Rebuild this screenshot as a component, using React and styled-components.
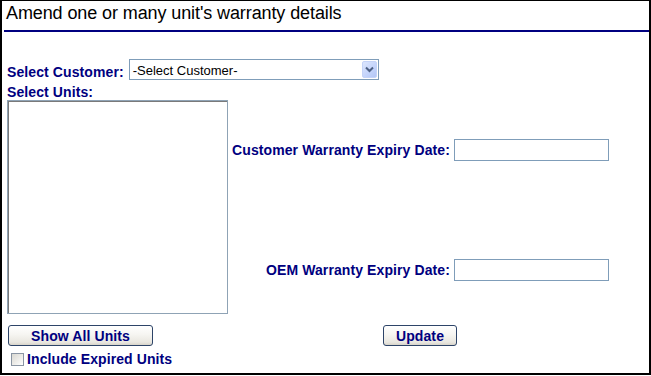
import React from "react";
import styled, { createGlobalStyle } from "styled-components";

const Global = createGlobalStyle`
  html, body { margin: 0; padding: 0; background: #fff; }
  * { box-sizing: border-box; }
`;

const Frame = styled.div`
  width: 651px;
  height: 375px;
  border-style: solid;
  border-color: #000;
  border-width: 1px 2px 2px 2px;
  background: #fff;
  font-family: "Liberation Sans", Arial, sans-serif;
  display: flex;
  flex-direction: column;
`;

const Title = styled.div`
  padding: 2px 0 0 4px;
  height: 23px;
  font-size: 18px;
  line-height: 21px;
  letter-spacing: -0.1px;
  color: #000;
`;

const Rule = styled.div`
  height: 2px;
  margin: 6px 0 0 2px;
  background: #000080;
`;

const Form = styled.div`
  padding-left: 5px;
  display: flex;
  flex-direction: column;
`;

const Row = styled.div`
  display: flex;
  align-items: ${(p) => p.$align || "center"};
  gap: ${(p) => p.$gap || 0}px;
  margin-top: ${(p) => p.$top || 0}px;
`;

const Label = styled.span`
  font-size: 14px;
  font-weight: bold;
  line-height: 16px;
  letter-spacing: 0.1px;
  color: #000080;
  white-space: nowrap;
  padding-top: ${(p) => p.$drop || 0}px;
`;

const SelectBox = styled.div`
  width: 250px;
  height: 21px;
  border: 1px solid #7f9db9;
  background: #fff;
  display: flex;
  align-items: center;
  justify-content: space-between;
  font-size: 13px;
  color: #000;
  padding-left: 3px;
`;

const SelectText = styled.span`
  line-height: 15px;
  padding-top: 1px;
`;

const ArrowBtn = styled.span`
  width: 15px;
  height: 17px;
  margin-right: 1px;
  border-radius: 2px;
  background: linear-gradient(135deg, #dce6fd 0%, #c3d3fb 60%, #b3c6f5 100%);
  border: 1px solid #c4d3f8;
  display: flex;
  align-items: center;
  justify-content: center;
`;

const ListBox = styled.div`
  width: 221px;
  height: 214px;
  border: 1px solid #8fa3b5;
  box-shadow: inset 1px 1px 0 #7a7a7a;
  background: #fff;
  flex: none;
`;

const RightCol = styled.div`
  width: 381px;
  padding-top: 39px;
  display: flex;
  flex-direction: column;
  gap: 98px;
`;

const FieldRow = styled.div`
  display: flex;
  justify-content: flex-end;
  align-items: center;
  gap: 4px;
`;

const TextInput = styled.div`
  width: 155px;
  height: 22px;
  border: 1px solid #7f9db9;
  background: #fff;
`;

const Button = styled.div`
  width: ${(p) => p.$w}px;
  height: 21px;
  margin-left: ${(p) => p.$ml || 0}px;
  border: 1px solid #2d4468;
  border-radius: 3px;
  background: linear-gradient(#ffffff 0%, #f6f5f1 45%, #e9e7e0 85%, #d8d4ca 100%);
  display: flex;
  align-items: center;
  justify-content: center;
  font-size: 14px;
  font-weight: bold;
  letter-spacing: 0.1px;
  color: #000080;
  line-height: 16px;
`;

const Check = styled.span`
  width: 13px;
  height: 13px;
  margin-left: 4px;
  border: 1px solid #8a95a3;
  background: linear-gradient(135deg, #d9d8d2 0%, #ecebe7 50%, #ffffff 100%);
  flex: none;
`;

export default function App() {
  return (
    <>
      <Global />
      <Frame>
        <Title>Amend one or many unit's warranty details</Title>
        <Rule />
        <Form>
          <Row $top={27} $gap={5}>
            <Label $drop={4}>Select Customer:</Label>
            <SelectBox>
              <SelectText>-Select Customer-</SelectText>
              <ArrowBtn>
                <svg width="9" height="7" viewBox="0 0 9 7">
                  <path d="M1 1.5 L4.5 5 L8 1.5" fill="none" stroke="#4d6185" strokeWidth="2" />
                </svg>
              </ArrowBtn>
            </SelectBox>
          </Row>
          <Row $top={4}>
            <Label>Select Units:</Label>
          </Row>
          <Row $align="stretch">
            <ListBox />
            <RightCol>
              <FieldRow>
                <Label>Customer Warranty Expiry Date:</Label>
                <TextInput />
              </FieldRow>
              <FieldRow>
                <Label>OEM Warranty Expiry Date:</Label>
                <TextInput />
              </FieldRow>
            </RightCol>
          </Row>
          <Row $top={11}>
            <Button $w={145} $ml={1}>Show All Units</Button>
            <Button $w={74} $ml={230}>Update</Button>
          </Row>
          <Row $top={5} $gap={3}>
            <Check />
            <Label>Include Expired Units</Label>
          </Row>
        </Form>
      </Frame>
    </>
  );
}
